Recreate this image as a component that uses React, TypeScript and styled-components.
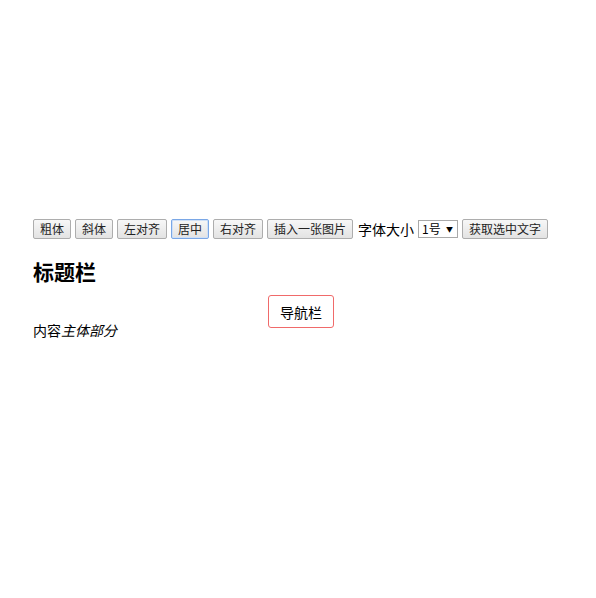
import React from 'react'
import styled, { createGlobalStyle } from 'styled-components'

const GlobalStyle = createGlobalStyle`
  html, body {
    margin: 0;
    padding: 0;
    background: #fff;
  }
  body {
    font-family: "Noto Sans CJK SC", "Liberation Sans", sans-serif;
    color: #000;
  }
`

const Page = styled.div`
  width: 596px;
  height: 598px;
  box-sizing: border-box;
  padding: 219px 0 0 33px;
`

const Toolbar = styled.div`
  display: flex;
  align-items: center;
  gap: 4px;
  height: 20px;
`

const ToolButton = styled.button<{ $focused?: boolean }>`
  height: 20px;
  padding: 0 6px;
  font-family: "Noto Sans CJK SC", sans-serif;
  font-size: 12px;
  line-height: 18px;
  color: #222;
  border: 1px solid ${p => (p.$focused ? '#7aa7e6' : '#adadad')};
  border-radius: 2px;
  background: linear-gradient(#f7f7f7, #e3e3e3);
  box-shadow: ${p => (p.$focused ? 'inset 0 0 0 1px #cfe0f7' : 'none')};
  cursor: pointer;
`

const Label = styled.span`
  font-size: 14px;
  line-height: 20px;
  margin: 0 0 0 1px;
`

const SizeSelect = styled.div`
  display: flex;
  align-items: center;
  justify-content: space-between;
  box-sizing: border-box;
  width: 40px;
  height: 18px;
  padding: 0 4px 0 3px;
  border: 1px solid #a9a9a9;
  font-size: 12px;
  line-height: 16px;
  background: #fff;
`

const Arrow = styled.span`
  font-size: 7px;
  line-height: 16px;
`

const Title = styled.h2`
  margin: 18px 0 0;
  font-size: 21px;
  line-height: 28px;
  font-weight: bold;
`

const Body = styled.div`
  position: relative;
  height: 60px;
`

const Nav = styled.div`
  position: absolute;
  left: 235px;
  top: 10px;
  box-sizing: border-box;
  width: 66px;
  height: 33px;
  border: 1px solid #f06a6a;
  border-radius: 3px;
  display: flex;
  align-items: center;
  justify-content: center;
  font-size: 14px;
`

const Content = styled.p`
  position: absolute;
  left: 0;
  top: 35px;
  margin: 0;
  font-size: 14px;
  line-height: 20px;
`

export default function App() {
  return (
    <>
      <GlobalStyle />
      <Page>
        <Toolbar>
          <ToolButton>粗体</ToolButton>
          <ToolButton>斜体</ToolButton>
          <ToolButton>左对齐</ToolButton>
          <ToolButton $focused>居中</ToolButton>
          <ToolButton>右对齐</ToolButton>
          <ToolButton>插入一张图片</ToolButton>
          <Label>字体大小</Label>
          <SizeSelect>
            1号<Arrow>▼</Arrow>
          </SizeSelect>
          <ToolButton>获取选中文字</ToolButton>
        </Toolbar>
        <Title>标题栏</Title>
        <Body>
          <Nav>导航栏</Nav>
          <Content>
            内容<i>主体部分</i>
          </Content>
        </Body>
      </Page>
    </>
  )
}
